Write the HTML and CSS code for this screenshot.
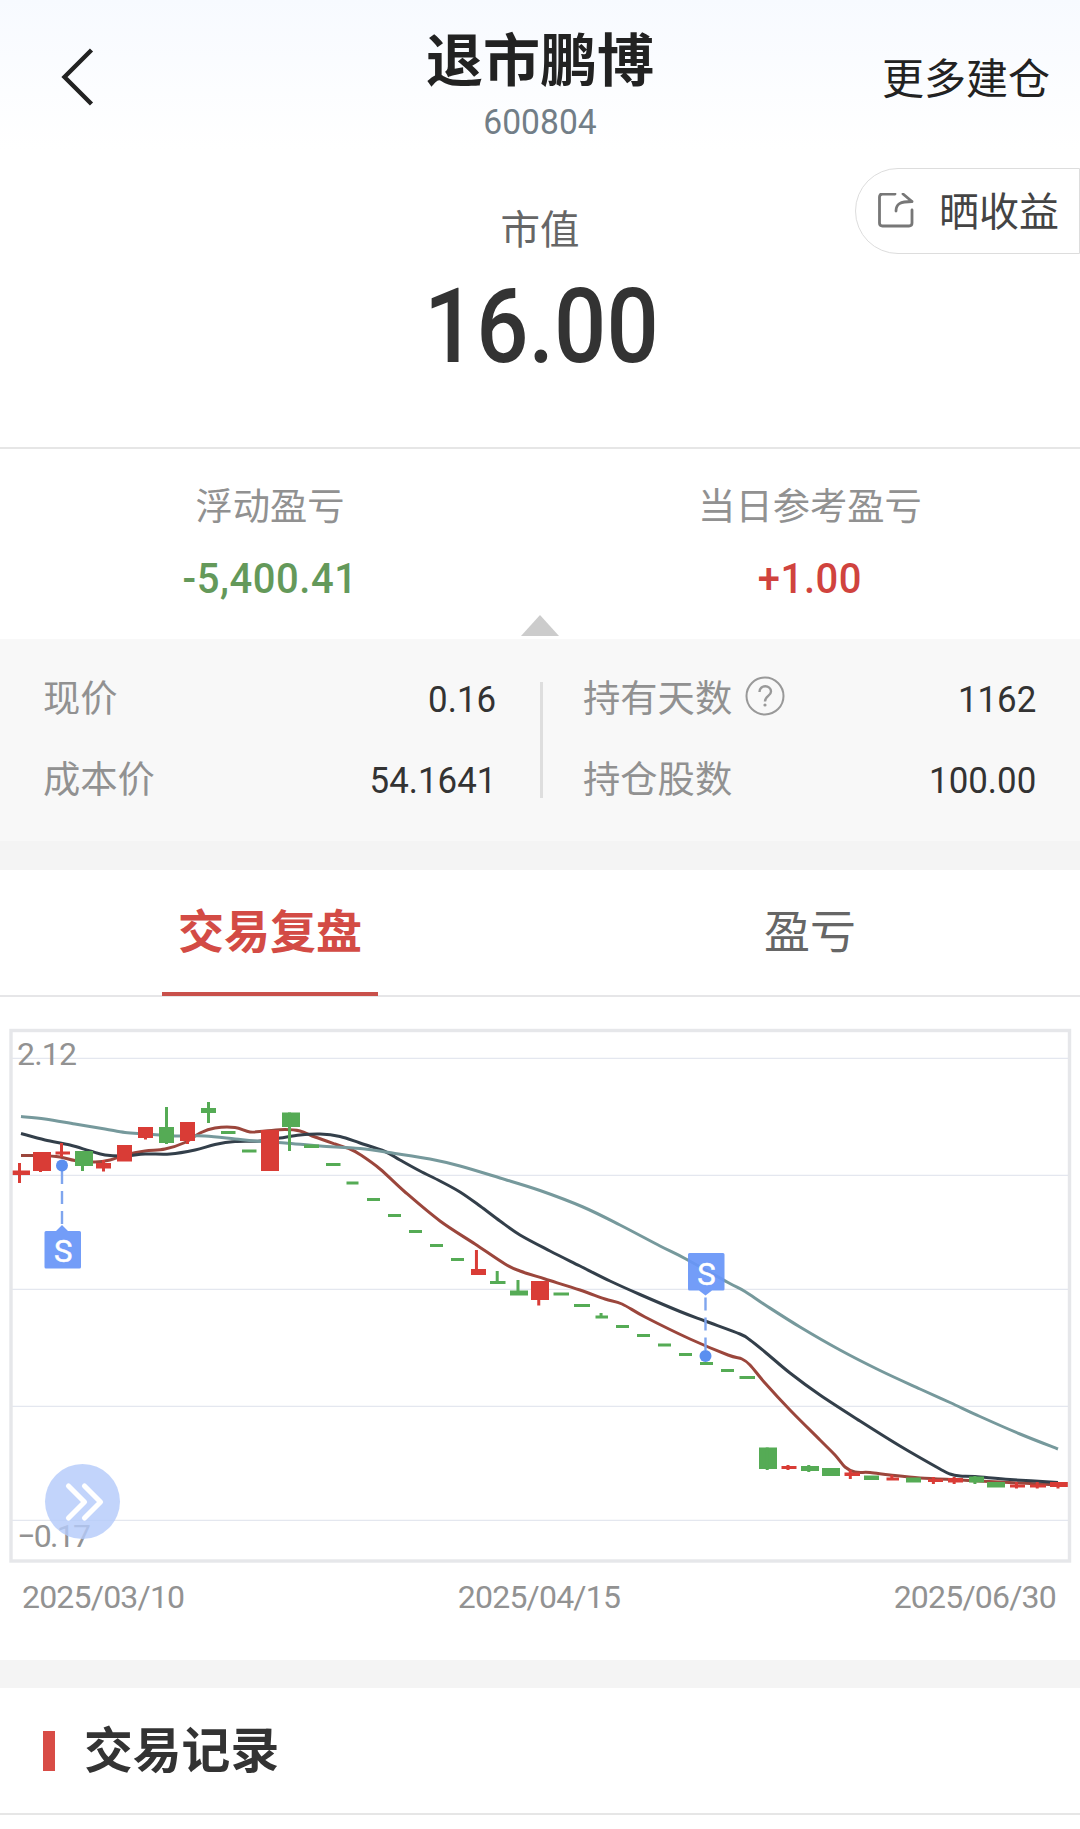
FILE: index.html
```html
<!DOCTYPE html>
<html lang="zh-CN">
<head>
  <meta charset="UTF-8">
  <meta name="viewport" content="width=device-width, initial-scale=1.0">
  <title>退市鹏博</title>
  <link rel="stylesheet" href="styles.css">
</head>

<body>

  <div class="container">
    <header class="header">
      <a href="#" class="btn-back">
        <svg width="40" height="64" viewBox="0 0 40 64"><path d="M31.500 5 L4.500 32 L31.500 59" fill="none" stroke="#222" stroke-width="4.400"/></svg>
      </a>
      <div class="stock">
        <h1 class="stock-name">退市鹏博</h1>
        <p class="stock-code num">600804</p>
      </div>
      <a href="#" class="link-more">更多建仓</a>
    </header>

    <section class="market">
      <p class="market-label">市值</p>
      <p class="market-value num">16.00</p>
      <a href="#" class="btn-share">
        <svg width="36" height="36" viewBox="0 0 36 36" fill="none" stroke="#777" stroke-width="2.8" stroke-linecap="round" stroke-linejoin="round">
          <path d="M17 1 H4.500 Q1.500 1 1.500 4 V30 Q1.500 33 4.500 33 H31 Q34 33 34 30 V17"/>
          <path d="M18 18 C18 11 22 8.500 34 8.500 M25 1 L34 8.500"/>
        </svg>
        <span class="share-text">晒收益</span>
      </a>
    </section>

    <!-- 盈亏 -->
    <section class="profit">
      <div class="profit-item">
        <p class="profit-label">浮动盈亏</p>
        <p class="profit-value num down">-5,400.41</p>
      </div>
      <div class="profit-item">
        <p class="profit-label">当日参考盈亏</p>
        <p class="profit-value num up">+1.00</p>
      </div>
      <span class="arrow-up"></span>
    </section>

    <!-- 持仓明细 -->
    <section class="detail">
      <dl class="detail-col">
        <div class="detail-row"><dt>现价</dt><dd class="num">0.16</dd></div>
        <div class="detail-row"><dt>成本价</dt><dd class="num">54.1641</dd></div>
      </dl>
      <dl class="detail-col">
        <div class="detail-row">
          <dt>持有天数
            <svg class="ico-help" width="40" height="40" viewBox="0 0 40 40" fill="none" stroke="#999">
              <circle cx="20" cy="20" r="18.500" stroke-width="2"/>
              <path d="M14.500 16 C14.500 8.500 26 8.500 26 15.500 C26 20 20 20 20 25.500" stroke-width="2.400"/>
              <circle cx="20" cy="29" r="1.600" fill="#999" stroke="none"/>
            </svg>
          </dt>
          <dd class="num">1162</dd>
        </div>
        <div class="detail-row"><dt>持仓股数</dt><dd class="num">100.00</dd></div>
      </dl>
    </section>

    <nav class="tabs">
      <a href="#" class="tab active">交易复盘</a>
      <a href="#" class="tab">盈亏</a>
    </nav>

    <!-- K线图 -->
    <section class="chart">
      <svg id="kline" width="1080" height="545" viewBox="0 1024 1080 545">
        <g stroke="#e4e7ef" stroke-width="1.300">
          <path d="M11 1058.400 H1069 M11 1175.400 H1069 M11 1289.400 H1069 M11 1406.400 H1069 M11 1520.400 H1069"/>
        </g>
        <text x="17" y="1065" class="axis" textLength="60">2.12</text>
        <text x="17" y="1547" class="axis" textLength="74">−0.17</text>
        <g id="lines"></g>
        <g id="candles"></g>
        <rect x="11" y="1030.500" width="1058.500" height="530.500" fill="none" stroke="#e6e7ea" stroke-width="3.400"/>
        <g class="mark">
          <path class="mark-line" d="M62 1171 V1224"/>
          <circle cx="62" cy="1165.500" r="6"/>
          <path class="mark-box" d="M46 1231 H56 L62 1225 L68 1231 H79.500 Q81 1231 81 1232.500 V1267 Q81 1268.500 79.500 1268.500 H46 Q44.500 1268.500 44.500 1267 V1232.500 Q44.500 1231 46 1231 Z"/>
          <text x="63.200" y="1261.500">S</text>
        </g>
        <g class="mark">
          <path class="mark-line" d="M705.500 1297.500 V1350"/>
          <circle cx="705.500" cy="1356" r="6"/>
          <path class="mark-box" d="M689.500 1253 H723 Q724.500 1253 724.500 1254.500 V1289 Q724.500 1290.500 723 1290.500 H712 L705.500 1295.500 L699 1290.500 H689.500 Q688 1290.500 688 1289 V1254.500 Q688 1253 689.500 1253 Z"/>
          <text x="706.500" y="1285">S</text>
        </g>
        <circle cx="82.500" cy="1501.500" r="37.500" fill="#b4cbfa" fill-opacity=".82"/>
        <path d="M68.500 1486 L84.500 1502 L68.500 1518 M84.500 1486 L100.500 1502 L84.500 1518" fill="none" stroke="#fff" stroke-width="5.200" stroke-linecap="round" stroke-linejoin="round"/>
      </svg>
      <div class="dates num">
        <span>2025/03/10</span>
        <span>2025/04/15</span>
        <span>2025/06/30</span>
      </div>
    </section>

    <section class="record">
      <h2 class="record-title"><span>交易记录</span></h2>
    </section>
  </div>

  <script src="script.js"></script>
</body>
</html>
```
FILE: styles.css
```css
* {
  padding: 0;
  margin: 0;
  box-sizing: border-box;
}
a {
  text-decoration: none;
  color: inherit;
}
body {
  background-color: #fff;
  font-family: "Noto Sans CJK SC", sans-serif;
  color: #333;
}
svg {
  display: block;
}
.num {
  font-family: Roboto, "Noto Sans CJK SC", sans-serif;
}
.container {
  width: 1080px;
  height: 1829px;
  overflow: hidden;
}

/* 头部 */
.header {
  display: grid;
  grid-template-columns: 1fr 400px 1fr;
  height: 150px;
  background: linear-gradient(#f7faff, #fff);
}
.btn-back {
  padding: 45px 0 0 60px;
}
.stock {
  text-align: center;
  padding-top: 15px;
}
.stock-name {
  font-size: 57px;
  font-weight: 700;
  line-height: 82px;
  color: #222;
}
.stock-code {
  margin-top: 4px;
  font-size: 35px;
  line-height: 44px;
  color: #727e87;
  transform: scaleX(0.96);
}
.link-more {
  padding: 46px 30px 0 0;
  text-align: right;
  font-size: 42px;
  line-height: 60px;
  color: #222;
}

/* 市值 */
.market {
  position: relative;
  height: 299px;
  padding-top: 47px;
  border-bottom: 2px solid #e6e6e6;
  text-align: center;
}
.market-label {
  font-size: 39.5px;
  line-height: 60px;
  color: #666;
}
.market-value {
  margin-top: 5px;
  padding-left: 3px;
  font-size: 104px;
  font-weight: 500;
  line-height: 130px;
  transform: scaleX(0.885);
}
.btn-share {
  position: absolute;     /* 贴在右边 */
  top: 18px;
  right: 0;
  display: flex;
  align-items: center;
  gap: 25px;
  width: 225px;
  height: 86px;
  padding-left: 22px;
  border: 1px solid #ddd;
  border-radius: 43px 0 0 43px;
  font-size: 40px;
  color: #444;
}
.share-text {
  padding-bottom: 4px;
}

/* 盈亏 */
.profit {
  position: relative;
  display: flex;
  height: 190px;
  padding-top: 25px;
  text-align: center;
}
.profit-item {
  flex: 1;
}
.profit-label {
  font-size: 37.3px;
  line-height: 60px;
  color: #919191;
}
.profit-value {
  margin-top: 14px;
  font-size: 43px;
  font-weight: 500;
  line-height: 60px;
  letter-spacing: 0.6px;
  transform: scaleX(0.93);
}
.down {
  color: #64995a;
}
.up {
  color: #d0433e;
}
.arrow-up {
  position: absolute;
  left: 521px;
  bottom: 3px;
  border: 19px solid transparent;
  border-top: 0;
  border-bottom: 21px solid #ccc;
}

/* 明细 */
.detail {
  display: flex;
  height: 231px;
  padding-top: 16px;
  background-color: #f8f8f8;
  border-bottom: 29px solid #f4f4f4;
}
.detail-col {
  position: relative;
  flex: 1;
  padding: 0 44px 0 43px;
}
.detail-col + .detail-col::before {
  content: '';
  position: absolute;
  left: 0;
  top: 27px;
  width: 3px;
  height: 116px;
  background-color: #dedede;
}
.detail-row {
  display: flex;
  justify-content: space-between;
  align-items: center;
  height: 81px;
}
.detail-row dt {
  display: flex;
  align-items: center;
  gap: 13px;
  font-size: 37.3px;
  color: #919191;
}
.detail-row dd {
  padding-top: 7px;
  font-size: 37.5px;
  transform: scaleX(0.93);
  transform-origin: right;
}

/* 标签 */
.tabs {
  display: flex;
  height: 127px;
  border-bottom: 2px solid #e6e6e8;
}
.tab {
  position: relative;
  flex: 1;
  text-align: center;
  font-size: 46px;
  line-height: 116px;
  color: #666;
}
.tab.active {
  font-weight: 700;
  color: #d34b45;
}
.tab.active::after {
  content: '';
  position: absolute;
  left: 162px;
  bottom: -1px;
  width: 216px;
  height: 4px;
  background-color: #c9504b;
}

/* 图表 */
.chart {
  height: 691px;
  padding-top: 27px;
  border-bottom: 28px solid #f4f4f4;
}
.axis {
  font: 32px Roboto, sans-serif;
  fill: #929292;
}
.mark circle {
  fill: #5b8ff0;
}
.mark-line {
  stroke: #7fa5ee;
  stroke-width: 2.4;
  stroke-dasharray: 13 7;
}
.mark-box {
  fill: #6896f8;
  fill-opacity: 0.93;
}
.mark text {
  font: 31px Roboto, sans-serif;
  fill: #fff;
  stroke: #fff;
  stroke-width: 0.5;
  text-anchor: middle;
}
.dates {
  display: flex;
  justify-content: space-between;
  padding: 6px 24px 0 22px;
  font-size: 32px;
  line-height: 44px;
  letter-spacing: -0.8px;
  color: #929292;
}

/* 交易记录 */
.record {
  height: 127px;
  border-bottom: 2px solid #e6e6e6;
}
.record-title {
  display: flex;
  align-items: center;
  gap: 29px;
  height: 126px;
  padding-left: 43px;
  font-size: 48.8px;
}
.record-title span {
  padding-bottom: 9px;
}
.record-title::before {
  content: '';
  width: 12px;
  height: 40px;
  background-color: #d84c46;
}
```
FILE: script.js
```js
const NS = 'http://www.w3.org/2000/svg';
const RED = '#d93c36';
const GREEN = '#55ab55';

// [颜色, 左, 右, 实体上, 实体下, 影线上, 影线下]
const candles = [
  ['r', 12, 30, 1170.5, 1175, 1163, 1183],
  ['r', 33, 51, 1152, 1171, 1152, 1172],
  ['r', 55.5, 70, 1151.5, 1154.5, 1143, 1157],
  ['g', 75, 93, 1151, 1166, 1151, 1171],
  ['r', 96, 111, 1163, 1168.5, 1160, 1171.5],
  ['r', 117, 132, 1145, 1161.5],
  ['r', 138, 153, 1127, 1138, 1127, 1139.5],
  ['g', 159, 174, 1127, 1143, 1107, 1144],
  ['r', 180, 195, 1122, 1141, 1122, 1144],
  ['g', 201, 216, 1108, 1113, 1102, 1123],
  ['g', 221, 235.5, 1131, 1134],
  ['g', 242, 256.5, 1149.5, 1152.5],
  ['r', 261, 279, 1130, 1171],
  ['g', 282, 300, 1112.5, 1127, 1112.5, 1151],
  ['g', 304, 319, 1144.5, 1148],
  ['g', 326, 340.5, 1163, 1166],
  ['g', 346.5, 358.5, 1181.5, 1184.5],
  ['g', 367, 380, 1198, 1201],
  ['g', 388, 401, 1214, 1217],
  ['g', 409, 422, 1230, 1233],
  ['g', 430, 443, 1244, 1247],
  ['g', 451, 464, 1258, 1261],
  ['r', 471, 486, 1269, 1275, 1250, 1275],
  ['g', 490, 505.5, 1281, 1284, 1271, 1284],
  ['g', 510, 528, 1290.5, 1295.5, 1280, 1295],
  ['r', 531, 549, 1281, 1300, 1281, 1305.5],
  ['g', 553.5, 569, 1292.5, 1295.5],
  ['g', 574, 590, 1304, 1307],
  ['g', 595.5, 608, 1315.5, 1318.5, 1313, 1318],
  ['g', 616, 629, 1325, 1328],
  ['g', 637, 650, 1334, 1337],
  ['g', 658, 671, 1343.5, 1346.5],
  ['g', 679, 692, 1353, 1356],
  ['g', 700, 713, 1362, 1365],
  ['g', 721, 734, 1369, 1372],
  ['g', 739.5, 755, 1376, 1379],
  ['g', 759, 777, 1447.5, 1469, 1447.5, 1470],
  ['r', 781.5, 796.5, 1466, 1469, 1465, 1470],
  ['g', 801, 819, 1466, 1471, 1465, 1472],
  ['g', 822, 840, 1468, 1476],
  ['r', 844.5, 860, 1472.5, 1476, 1470, 1479],
  ['g', 864, 879, 1475.5, 1480],
  ['r', 886.5, 899, 1477.5, 1480.5, 1475, 1480],
  ['g', 906, 921, 1477.5, 1482.5],
  ['r', 928, 943, 1479, 1482, 1477, 1484],
  ['r', 948, 963, 1478, 1482.5, 1477, 1484],
  ['g', 969, 984, 1476.5, 1482.5, 1476, 1484],
  ['g', 987, 1005, 1482, 1487.5],
  ['r', 1010, 1025, 1484.5, 1487.5, 1482, 1488.5],
  ['r', 1030, 1046, 1484.5, 1487.5, 1482, 1488.5],
  ['r', 1050, 1068, 1482, 1487, 1482, 1488.5]
];

// 均线
const lines = {
  '#9b463c': [[21,1155.5],[40,1155.5],[60,1157],[75,1160.5],[95,1162],[110,1160],[125,1155],[145,1151],[165,1149],[185,1142.5],[200,1133],[215,1128],[235,1127.5],[250,1132],[265,1131],[285,1129.5],[300,1131],[315,1137],[335,1144],[350,1149],[360,1154.5],[380,1169],[405,1192],[440,1221],[475,1244],[505,1264],[520,1271],[545,1279],[580,1290],[605,1299],[622,1304],[645,1317],[690,1339],[728,1355],[742,1359],[750,1365],[765,1383],[790,1410],[820,1440],[835,1455],[845,1467],[855,1472],[870,1472.5],[890,1475],[920,1478],[960,1480],[1000,1482],[1058,1485]],
  '#333f4a': [[21,1133.5],[45,1140],[70,1145],[90,1151],[105,1155],[125,1156],[145,1154],[170,1154],[195,1150],[215,1144.5],[235,1141.5],[260,1141],[280,1138],[300,1135],[320,1134],[340,1136.5],[360,1143],[385,1151.5],[400,1160],[420,1171],[440,1181],[460,1192],[480,1206],[500,1221],[520,1235],[550,1251],[580,1266],[610,1281],[640,1294.5],[680,1311.5],[705,1321],[740,1334],[750,1340],[765,1352],[790,1373],[820,1395],[860,1421],[900,1446],[940,1469],[950,1474],[960,1476],[975,1476.5],[1010,1479.5],[1058,1482.5]],
  '#76999c': [[21,1116.5],[45,1119],[75,1124],[105,1129],[125,1132.5],[145,1134],[175,1136],[205,1136],[235,1139],[255,1141],[285,1143],[320,1146],[360,1148.5],[395,1153.5],[430,1159],[460,1166],[500,1178],[540,1190.5],[583,1207],[620,1225],[660,1246],[685,1258.5],[728,1282.5],[745,1291.5],[766,1305.5],[800,1327],[840,1350],[880,1370.5],[920,1389],[950,1402.5],[980,1416.5],[1020,1434],[1058,1449]]
};

function add(parent, tag, attrs) {
  const el = document.createElementNS(NS, tag);
  for (const key in attrs) el.setAttribute(key, attrs[key]);
  document.getElementById(parent).appendChild(el);
}

// 平滑曲线
function smooth(p) {
  let d = `M${p[0]}`;
  for (let i = 0; i < p.length - 1; i++) {
    const a = p[i - 1] || p[i], b = p[i], c = p[i + 1], e = p[i + 2] || c;
    d += ` C${b[0] + (c[0] - a[0]) / 6},${b[1] + (c[1] - a[1]) / 6} ${c[0] - (e[0] - b[0]) / 6},${c[1] - (e[1] - b[1]) / 6} ${c}`;
  }
  return d;
}

for (const color in lines) {
  add('lines', 'path', { d: smooth(lines[color]), fill: 'none', stroke: color, 'stroke-width': 3 });
}

candles.forEach(([type, x1, x2, top, bottom, high, low], i) => {
  const fill = type === 'r' ? RED : GREEN;
  const step = i < 10 ? 21 : 20.77;
  add('candles', 'rect', { x: x1, y: top, width: x2 - x1, height: bottom - top, fill });
  if (high) add('candles', 'rect', { x: 18 + i * step, y: high, width: 3, height: low - high, fill });
});
```
